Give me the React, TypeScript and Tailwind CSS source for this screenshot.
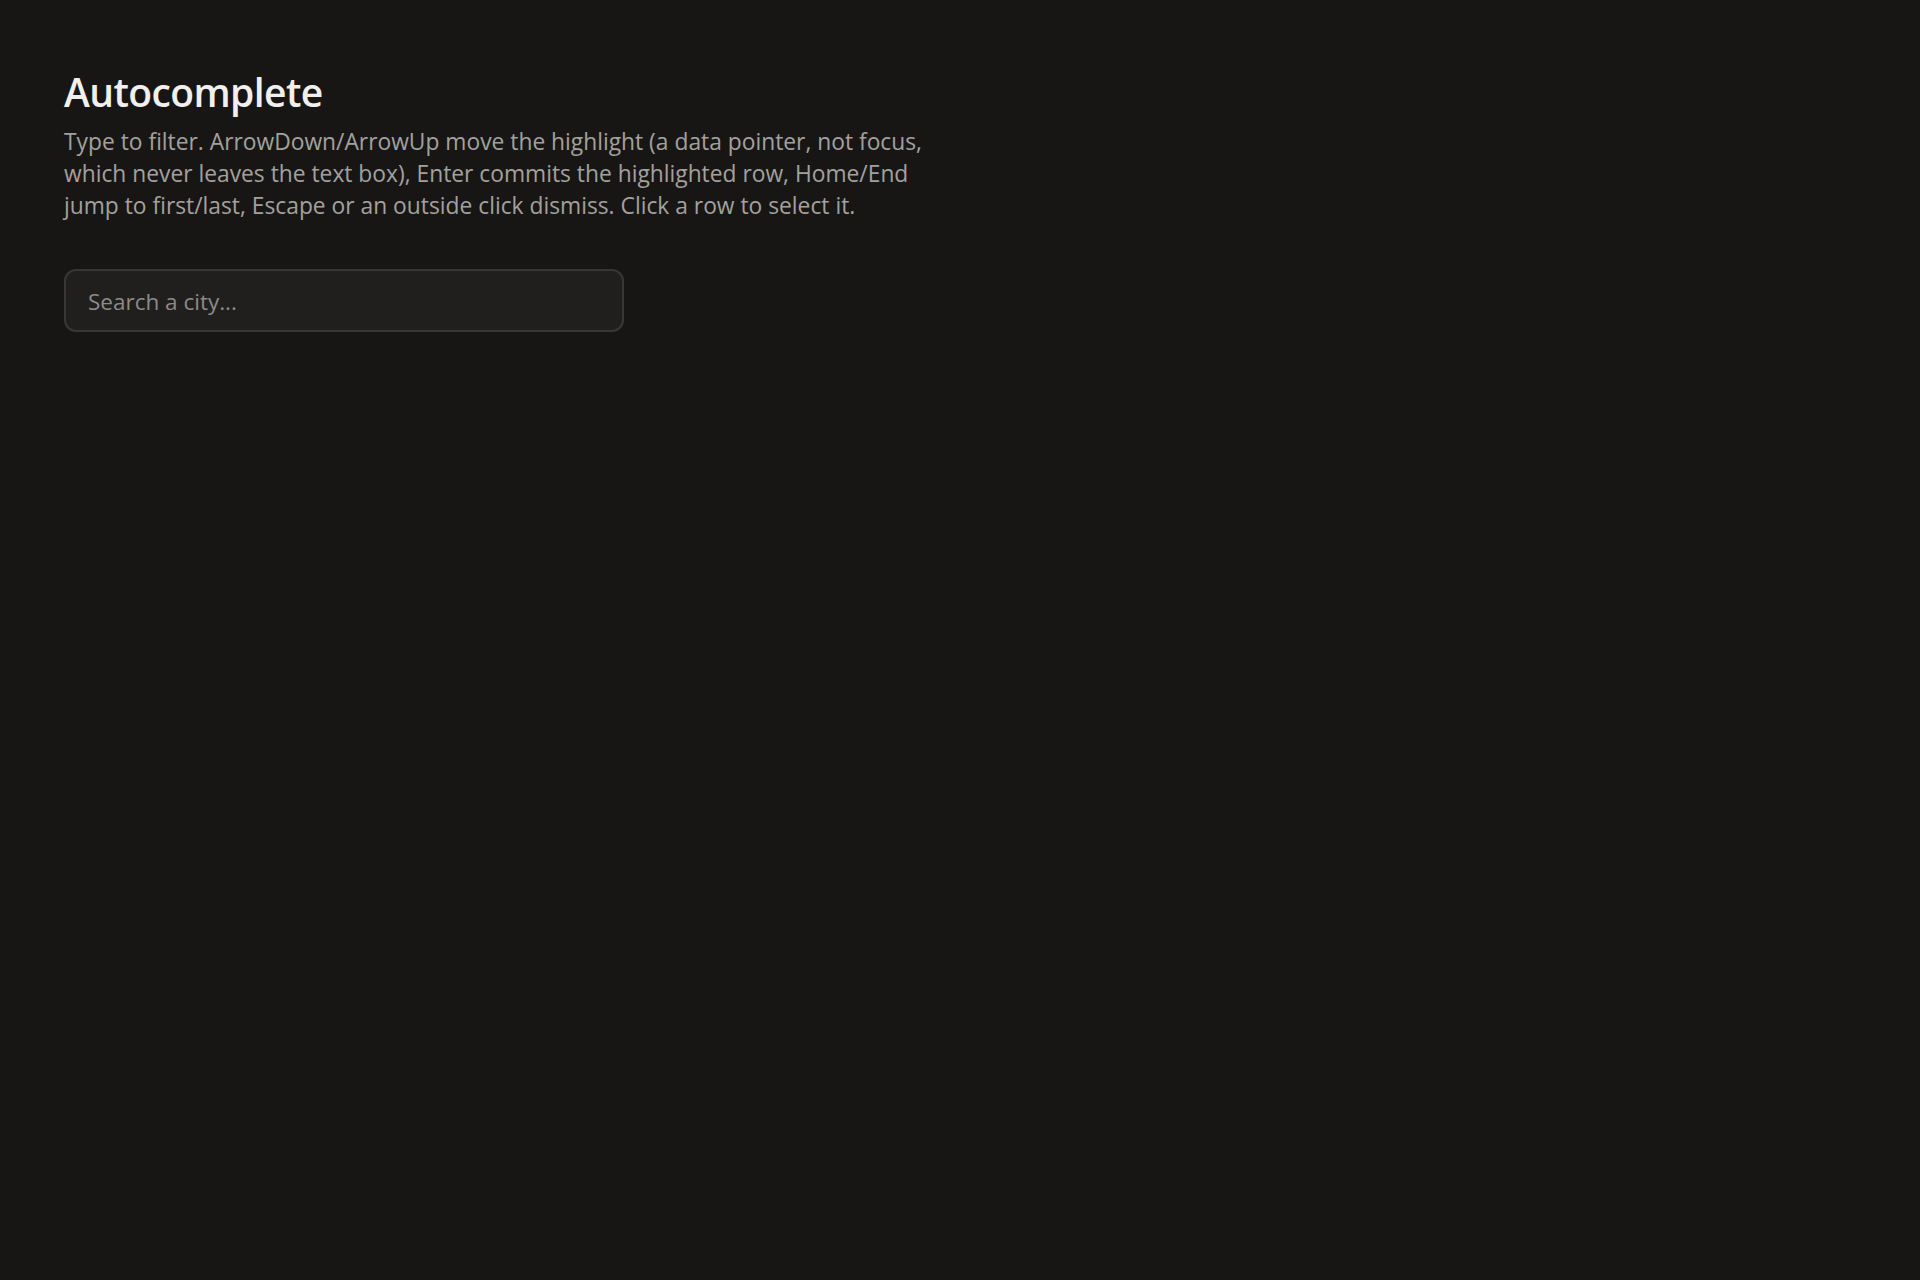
import { useState } from "react";

const CITIES = [
  "Amsterdam",
  "Athens",
  "Barcelona",
  "Berlin",
  "Brussels",
  "Copenhagen",
  "Dublin",
  "Lisbon",
  "London",
  "Madrid",
  "Oslo",
  "Paris",
  "Prague",
  "Rome",
  "Stockholm",
  "Vienna",
];

export default function App() {
  const [query, setQuery] = useState("");
  const [open, setOpen] = useState(false);
  const [active, setActive] = useState(0);

  const matches = query
    ? CITIES.filter((c) => c.toLowerCase().includes(query.toLowerCase()))
    : [];

  const commit = (city: string) => {
    setQuery(city);
    setOpen(false);
  };

  const onKeyDown = (e: React.KeyboardEvent<HTMLInputElement>) => {
    if (!open || matches.length === 0) return;
    if (e.key === "ArrowDown") {
      e.preventDefault();
      setActive((i) => Math.min(i + 1, matches.length - 1));
    } else if (e.key === "ArrowUp") {
      e.preventDefault();
      setActive((i) => Math.max(i - 1, 0));
    } else if (e.key === "Home") {
      setActive(0);
    } else if (e.key === "End") {
      setActive(matches.length - 1);
    } else if (e.key === "Enter") {
      commit(matches[active]);
    } else if (e.key === "Escape") {
      setOpen(false);
    }
  };

  return (
    <main
      className="min-h-screen bg-[#171615] px-16 pt-[68px] text-[#efeeec]"
      style={{ fontFamily: '"Open Sans", "Noto Sans", sans-serif' }}
    >
      <h1 className="text-[39px] font-semibold leading-[48px] tracking-[-0.015em] text-[#f1f0ee]">
        Autocomplete
      </h1>
      <p className="mt-[10px] max-w-[880px] text-[22.8px] leading-[32px] text-[#a3a19e]">
        Type to filter. ArrowDown/ArrowUp move the highlight (a data pointer,
        not focus, which never leaves the text box), Enter commits the
        highlighted row, Home/End jump to first/last, Escape or an outside
        click dismiss. Click a row to select it.
      </p>

      {/* Combobox */}
      <div className="relative mt-[47px] w-[560px]">
        <input
          type="text"
          value={query}
          placeholder="Search a city..."
          onChange={(e) => {
            setQuery(e.target.value);
            setActive(0);
            setOpen(true);
          }}
          onKeyDown={onKeyDown}
          onBlur={() => setOpen(false)}
          className="h-[63px] w-full rounded-[12px] border-2 border-[#383735] bg-[#201f1e] px-[22px] pt-[2px] text-[22.5px] text-[#efeeec] placeholder:text-[#8d8b88] outline-none"
        />
        {open && matches.length > 0 && (
          <ul className="absolute left-0 right-0 top-full mt-2 overflow-hidden rounded-[12px] border border-[#363533] bg-[#201f1e] py-1">
            {matches.map((city, i) => (
              <li
                key={city}
                onMouseDown={() => commit(city)}
                className={
                  i === active
                    ? "cursor-pointer bg-[#2f2e2c] px-[22px] py-2 text-[18px]"
                    : "cursor-pointer px-[22px] py-2 text-[18px] text-[#cfcdca]"
                }
              >
                {city}
              </li>
            ))}
          </ul>
        )}
      </div>
    </main>
  );
}
